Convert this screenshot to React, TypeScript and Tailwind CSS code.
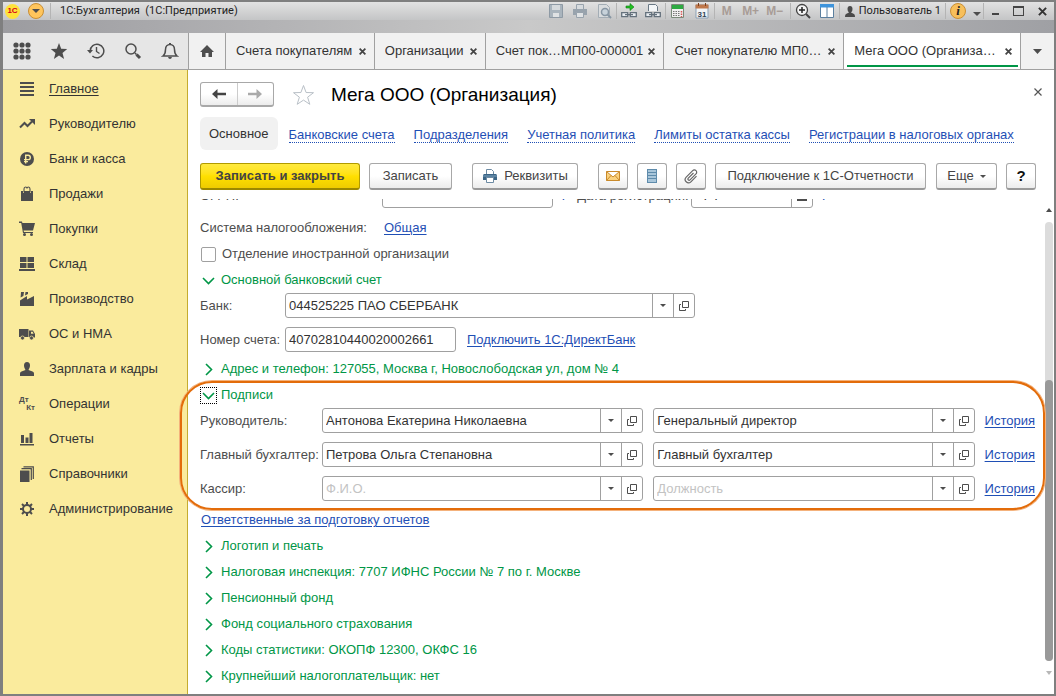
import { useState } from "react";
import type { ReactNode } from "react";
import clsx from "clsx";

/* ---------- data ---------- */

const openTabs = [
  { title: "Счета покупателям", size: "flex-[149]" },
  { title: "Организации", size: "flex-[111]" },
  { title: "Счет пок…МП00-000001", size: "flex-[179]" },
  { title: "Счет покупателю МП0…", size: "flex-[180]" },
  { title: "Мега ООО (Организа…", size: "flex-[177]", active: true },
];

const formLinks = [
  "Банковские счета",
  "Подразделения",
  "Учетная политика",
  "Лимиты остатка кассы",
  "Регистрации в налоговых органах",
];

const signers = [
  { label: "Руководитель:", name: "Антонова Екатерина Николаевна", post: "Генеральный директор" },
  { label: "Главный бухгалтер:", name: "Петрова Ольга Степановна", post: "Главный бухгалтер" },
  { label: "Кассир:", name: "", post: "" },
];

const collapsedGroups = [
  "Логотип и печать",
  "Налоговая инспекция: 7707 ИФНС России № 7 по г. Москве",
  "Пенсионный фонд",
  "Фонд социального страхования",
  "Коды статистики: ОКОПФ 12300, ОКФС 16",
  "Крупнейший налогоплательщик: нет",
];

/* ---------- sidebar icons, 16x16 ---------- */

const Icon = ({ children }: { children: ReactNode }) => (
  <svg viewBox="0 0 16 16" className="size-4 shrink-0" fill="#4d4d4d" aria-hidden="true">
    {children}
  </svg>
);

const menu = [
  {
    title: "Главное",
    icon: <path d="M1 1h14v2H1zM1 5h14v2H1zM1 9h14v2H1zM1 13h14v2H1z" />,
  },
  {
    title: "Руководителю",
    icon: (
      <>
        <path d="M1 11.5 5.5 7l3 3L13 5.5" fill="none" stroke="#4d4d4d" strokeWidth="2" />
        <path d="M10 3h6v6z" />
      </>
    ),
  },
  {
    title: "Банк и касса",
    icon: (
      <>
        <circle cx="8" cy="8" r="7" />
        <path d="M6.7 12.5V4.2h2.4a2.2 2.2 0 0 1 0 4.4H5M5 10.6h4" fill="none" stroke="#faeb9d" strokeWidth="1.4" />
      </>
    ),
  },
  {
    title: "Продажи",
    icon: (
      <>
        <path d="M2 5h2v2h1V5h6v2h1V5h2v10H2z" />
        <path d="M5 6.5V3q0-2 1.5-2T8 2.5Q8 1 9.5 1T11 3v3.5" fill="none" stroke="#4d4d4d" strokeWidth="1.1" />
      </>
    ),
  },
  {
    title: "Покупки",
    icon: (
      <>
        <path d="M0 .5h3l.4 1.500H16l-2 7.500H4.500L5 11h9v1H4L2.200 2H0z" />
        <circle cx="5.5" cy="13.5" r="1.5" />
        <circle cx="12.5" cy="13.5" r="1.5" />
      </>
    ),
  },
  {
    title: "Склад",
    icon: <path d="M1 1h6.500v5H1zM8.500 1H15v5H8.500zM1 7h6.500v5H1zM8.500 7H15v5H8.500zM0 13h16v2H0z" />,
  },
  {
    title: "Производство",
    icon: <path d="M1 9.500 8 5v3.500L15 5v10H1zM2 1h3l-.6 4L1.600 6.500zM6.500 1H9v2L6 4.500z" />,
  },
  {
    title: "ОС и НМА",
    icon: (
      <>
        <path d="M0 3h9.500v8H0zM10 4.500h4l2 3.500v3.500h-6z" />
        <path d="M12 5.700h1.600l1 2H12z" fill="#faeb9d" />
        <circle cx="3.5" cy="12" r="2" stroke="#faeb9d" strokeWidth=".7" />
        <circle cx="12.5" cy="12" r="2" stroke="#faeb9d" strokeWidth=".7" />
      </>
    ),
  },
  {
    title: "Зарплата и кадры",
    icon: (
      <path d="M8 1c2 0 3 1.500 3 3.500S9.800 8.500 9.500 9l4 1.500q1.500.6 1.500 2V15H1v-2.500q0-1.400 1.500-2l4-1.500C6.200 8.500 5 6.500 5 4.500S6 1 8 1z" />
    ),
  },
  { title: "Операции", icon: null },
  {
    title: "Отчеты",
    icon: <path d="M2 4h3v8H2zM6.500 6.500h3V12h-3zM10.500 2h3v10h-3zM1 13h14v1.500H1z" />,
  },
  {
    title: "Справочники",
    icon: (
      <>
        <path d="M1 4.500h9.500V16H1z" />
        <path d="M2.500 2.700h9.800V14M4.500.8h9.800V13" fill="none" stroke="#4d4d4d" strokeWidth="1.2" />
      </>
    ),
  },
  {
    title: "Администрирование",
    icon: (
      <>
        <circle cx="8" cy="8" r="4" fill="none" stroke="#4d4d4d" strokeWidth="2" />
        <path
          d="M8 1v3M8 12v3M1 8h3M12 8h3M3 3l2.200 2.200M10.800 10.800 13 13M13 3l-2.200 2.200M5.200 10.800 3 13"
          stroke="#4d4d4d"
          strokeWidth="2"
        />
      </>
    ),
  },
];

/* ---------- small parts ---------- */

const Caret = ({ className = "h-[3px] w-[6px]" }: { className?: string }) => (
  <svg viewBox="0 0 6 3" preserveAspectRatio="none" className={className} fill="#4d4d4d" aria-hidden="true">
    <path d="M0 0h6L3 3z" />
  </svg>
);

const OpenIcon = () => (
  <svg viewBox="0 0 10 10" className="size-[10px]" fill="none" stroke="#4d4d4d" aria-hidden="true">
    <path d="M3.500.5h6v6h-6zM2 3.500H.5v6h6V8" />
  </svg>
);

type FieldProps = {
  id: string;
  label: string;
  value: string;
  placeholder?: string;
  className?: string;
  picker?: boolean;
};

const Field = ({ id, label, value, placeholder, className, picker = true }: FieldProps) => {
  const [text, setText] = useState(value);

  return (
    <div className={clsx("flex h-[25px] min-w-0 overflow-hidden rounded-[3px] border border-[#a0a0a0] bg-white", className)}>
      <input
        id={id}
        aria-label={label}
        value={text}
        placeholder={placeholder}
        onChange={(e) => setText(e.target.value)}
        className="w-full min-w-0 flex-1 px-[3px] text-[#333] outline-none placeholder:text-[#c3c3c3]"
      />
      {picker && (
        <>
          <button aria-label="Выбрать" className="flex w-[21px] items-center justify-center border-l border-[#a0a0a0]">
            <Caret />
          </button>
          <button aria-label="Открыть" className="flex w-[21px] items-center justify-center border-l border-[#a0a0a0]">
            <OpenIcon />
          </button>
        </>
      )}
    </div>
  );
};

const Group = ({ title, open, focused }: { title: string; open?: boolean; focused?: boolean }) => (
  <button aria-expanded={!!open} className="flex h-[26px] items-center gap-1 text-[#009646]">
    <span
      className={clsx(
        "flex size-[17px] items-center justify-center border",
        focused ? "border-dotted border-black" : "border-transparent"
      )}
    >
      <svg viewBox="0 0 13 13" className="size-[13px] shrink-0" fill="none" stroke="#009646" strokeWidth="1.6" aria-hidden="true">
        <path d={open ? "M1 4l5.500 5.500L12 4" : "M4 1l5.500 5.500L4 12"} />
      </svg>
    </span>
    {title}
  </button>
);

const Link = ({ children }: { children: ReactNode }) => (
  <a href="#" className="whitespace-nowrap text-[#1f4fb5] underline underline-offset-2">
    {children}
  </a>
);

type ButtonProps = { children: ReactNode; className?: string; label?: string; primary?: boolean };

const Button = ({ children, className, label, primary }: ButtonProps) => (
  <button
    aria-label={label}
    className={clsx(
      "flex h-[27px] shrink-0 items-center justify-center rounded-[3px] border border-b-2 bg-gradient-to-b whitespace-nowrap text-[#444]",
      primary
        ? "border-[#b09a00] border-b-[#9c8800] from-[#ffea3d] via-[#ffe000] to-[#eecb00] font-bold"
        : "border-[#a8a8a8] border-b-[#999] from-white from-50% to-[#ececec]",
      className
    )}
  >
    {children}
  </button>
);

const Printer = () => (
  <svg viewBox="0 0 16 16" className="size-4" aria-hidden="true">
    <path d="M4.500 6V1.500h5l2 2V6" fill="#fff" stroke="#6c8aa3" />
    <path d="M2 6h12l1 1v5H1V7z" fill="#3b6586" />
    <path d="M1 8h14" stroke="#7fa3bf" />
    <path d="M4.500 9.500h7v5h-7z" fill="#fff" stroke="#6c8aa3" />
  </svg>
);

/* ---------- window title bar ---------- */

const Tool = ({ label, children }: { label: string; children: ReactNode }) => (
  <button aria-label={label} className="flex w-6 items-center justify-center">
    <svg viewBox="0 0 16 16" className="size-4" aria-hidden="true">
      {children}
    </svg>
  </button>
);

const Divider = () => <span className="h-4 w-px bg-[#b4b4b4]" />;

const TitleBar = () => (
  <header className="h-[31px] bg-gradient-to-r from-[#9c9ca0] via-[#c9c9c9] to-[#9fa0a4] text-[#222]">
    <div className="flex h-[18px] items-center bg-gradient-to-b from-[#e2e2e2] to-[#c4c5c6]">
      <span className="ml-[2px] flex size-[15px] items-center justify-center rounded-full bg-[#ffe23a] text-[8px] font-bold text-[#d6001c]">
        1С
      </span>
      <button
        aria-label="Главное меню"
        className="mr-[6px] ml-2 flex size-4 items-center justify-center rounded-full border border-[#c98f35] bg-[#ffc55c]"
      >
        <Caret className="h-[4px] w-[8px]" />
      </button>
      <Divider />
      <span className="ml-[9px] flex-1 font-[Roboto,sans-serif] text-[11px] whitespace-pre">1С:Бухгалтерия  (1С:Предприятие)</span>

      <Tool label="Сохранить">
        <path d="M1.500 1.500h13v13h-13z" fill="#a9b4bd" stroke="#8e9aa5" />
        <path d="M4 2h8v5H4z" fill="#d6dadd" />
        <path d="M5 10h6v4H5z" fill="#dfe2e4" />
      </Tool>
      <Tool label="Печать">
        <path d="M4.500 6V1.500h7V6" fill="#d7dbde" stroke="#98a3ad" />
        <path d="M1 6h14v6H1z" fill="#98a3ad" />
        <path d="M4.500 9.500h7v5h-7z" fill="#e0e3e5" stroke="#98a3ad" />
      </Tool>
      <Tool label="Просмотр">
        <path d="M2.500 1.500h8l3 3v10h-11z" fill="#d9dcde" stroke="#a3adb5" />
        <circle cx="9" cy="9" r="3.5" fill="#c7d2da" stroke="#8796a3" strokeWidth="1.5" />
        <path d="m11.500 11.500 3.500 3.500" stroke="#8796a3" strokeWidth="2" />
      </Tool>
      <Divider />
      <Tool label="Получить ссылку">
        <path d="M5 3h4V.5l4 3.500-4 3.500V5H5z" fill="#23c123" stroke="#0c7d12" strokeWidth=".6" />
        <path d="M.7 9.700h6v4h-6zM9.300 9.700h6v4h-6zM4 11.700h8" fill="#e8edf1" stroke="#64717c" strokeWidth="1.3" />
      </Tool>
      <Tool label="Перейти по ссылке">
        <path d="M3.500 8V1.500h7l2 2V8" fill="#f3f6f8" stroke="#697885" />
        <path d="M.7 9.700h6v4h-6zM9.300 9.700h6v4h-6zM4 11.700h8" fill="#e8edf1" stroke="#64717c" strokeWidth="1.3" />
      </Tool>
      <Divider />
      <Tool label="Калькулятор">
        <path d="M1.500 1.500h12v13h-12z" fill="#f1f1f1" stroke="#7b8b7b" />
        <path d="M2 2h11v4H2z" fill="#2eaa42" />
        <path d="M3 8.500h7M3 10.500h7M3 12.500h7" stroke="#777" strokeDasharray="1.5 1" />
        <path d="M11.500 8v6" stroke="#d65454" strokeWidth="1.5" strokeDasharray="1.5 1" />
      </Tool>
      <Tool label="Календарь">
        <path d="M2 2h12v13H2z" fill="#f2f4f6" stroke="#8ba0b5" />
        <path d="M1.500 1.500h13v4h-13z" fill="#c0784b" />
        <path d="M4.500 0v3M11.500 0v3" stroke="#7d3f1b" />
        <text x="8" y="13.5" textAnchor="middle" fontSize="8" fontWeight="bold" fill="#345">
          31
        </text>
      </Tool>
      <Divider />
      <div className="mr-[3px] flex text-xs font-bold text-[#a89c96]">
        <button className="w-6">M</button>
        <button className="w-6">M+</button>
        <button className="w-6">M−</button>
      </div>
      <Divider />
      <Tool label="Масштаб">
        <circle cx="7" cy="7" r="5.5" fill="#f4f4f4" stroke="#444" strokeWidth="1.3" />
        <path d="M4 7h6M7 4v6" stroke="#222" strokeWidth="1.5" />
        <path d="m11 11 4 4" stroke="#444" strokeWidth="2" />
      </Tool>
      <Tool label="Окна">
        <path d="M1.500 1.500h13v13h-13z" fill="#fff" stroke="#5b7f9e" />
        <path d="M1 1h14v3.500H1z" fill="#3e94dc" />
        <path d="M8 4v11" stroke="#5b7f9e" />
      </Tool>
      <Divider />
      <button className="ml-[5px] flex items-center gap-1 pr-1 font-[Roboto,sans-serif] text-[11px] whitespace-nowrap">
        <svg viewBox="0 0 10 11" className="h-[11px] w-[10px]" fill="#4a4a4a" aria-hidden="true">
          <path d="M5 0q2.500 0 2.500 3T6 6.500L9 8q1 .5 1 3H0q0-2.500 1-3l3-1.500Q2.500 6 2.500 3T5 0z" />
        </svg>
        Пользователь 1
      </button>
      <Divider />
      <button
        aria-label="Справка"
        className="ml-1 flex size-4 items-center justify-center rounded-full border border-[#c98f35] bg-[#f7bf5b] font-['Liberation_Serif',serif] text-[13px] font-bold italic"
      >
        i
      </button>
      <button aria-label="Меню справки" className="mr-[2px] ml-[7px] pt-[6px]">
        <Caret className="h-[4px] w-[8px]" />
      </button>
      <Divider />
      <button aria-label="Свернуть" className="flex w-[22px] items-center justify-center pt-[6px]">
        <span className="h-[2px] w-[7px] bg-[#444]" />
      </button>
      <button aria-label="Развернуть" className="flex w-6 items-center justify-center">
        <span className="h-[10px] w-[11px] border border-t-2 border-[#444]" />
      </button>
      <button aria-label="Закрыть" className="flex w-6 items-center justify-center">
        <svg viewBox="0 0 10 10" className="size-[9px]" stroke="#333" strokeWidth="2.2" aria-hidden="true">
          <path d="m1 1 8 8M9 1 1 9" />
        </svg>
      </button>
    </div>
  </header>
);

/* ---------- tab strip ---------- */

const Shortcut = ({ label, children }: { label: string; children: ReactNode }) => (
  <button aria-label={label} className="flex h-full w-[37px] items-center justify-center">
    <svg viewBox="0 0 18 18" className="size-[18px]" fill="#4d4d4d" aria-hidden="true">
      {children}
    </svg>
  </button>
);

const TabStrip = () => (
  <nav className="flex h-[37px] border-b border-[#a0a0a0] bg-[#f1f1f1] text-[#333]">
    <div className="flex w-[186px] shrink-0 items-center border-r border-[#a0a0a0] bg-[#e6e6e6]">
      <Shortcut label="Функции">
        {[3, 9, 15].map((y) => [3, 9, 15].map((x) => <circle key={`${x}-${y}`} cx={x} cy={y} r="2.6" />))}
      </Shortcut>
      <Shortcut label="Избранное">
        <path d="m9 1 2.200 5.800 6 .3-4.700 3.800 1.600 6L9 13.500 3.900 16.900l1.600-6L.8 7.100l6-.3z" />
      </Shortcut>
      <Shortcut label="История">
        <path d="M3.200 9a6.800 6.800 0 1 1 2.200 5" fill="none" stroke="#4d4d4d" strokeWidth="1.5" />
        <path d="M0 8h6l-3 3.500z" />
        <path d="M9.500 5v4.500l3 2" fill="none" stroke="#4d4d4d" strokeWidth="1.4" />
      </Shortcut>
      <Shortcut label="Поиск">
        <circle cx="7" cy="7" r="5" fill="none" stroke="#4d4d4d" strokeWidth="1.5" />
        <path d="m11 11 1.500 1.500" stroke="#4d4d4d" strokeWidth="1.5" />
        <path d="m12.500 12.500 3.500 3.500" stroke="#4d4d4d" strokeWidth="3" />
      </Shortcut>
      <Shortcut label="Оповещения">
        <path
          d="M2 14h14c-2-1.500-2.500-3-2.500-6.500C13.500 4.500 11.500 2.500 9 2.500S4.500 4.500 4.500 7.500C4.500 11 4 12.500 2 14z"
          fill="none"
          stroke="#4d4d4d"
          strokeWidth="1.5"
        />
        <path d="M8 1h2v2H8zM7 15h4q-.5 2-2 2t-2-2z" />
      </Shortcut>
    </div>
    <button aria-label="Начальная страница" className="flex w-[37px] shrink-0 items-center justify-center border-r border-[#a0a0a0]">
      <svg viewBox="0 0 14 12" className="h-3 w-[14px]" fill="#4d4d4d" aria-hidden="true">
        <path d="M7 0l7 7h-2v5H8.500V8h-3v4H2V7H0z" />
      </svg>
    </button>
    {openTabs.map((tab) => (
      <div key={tab.title} className={clsx("relative flex min-w-0", tab.size, tab.active && "bg-white")}>
        <div className="flex w-full min-w-0 items-center border-r border-[#a0a0a0] pr-2 pl-[10px]">
          <button className="min-w-0 flex-1 overflow-hidden text-left whitespace-nowrap">{tab.title}</button>
          <button aria-label="Закрыть вкладку" className="shrink-0">
            <svg viewBox="0 0 8 8" className="size-[7px]" stroke="#444" strokeWidth="2" aria-hidden="true">
              <path d="m.7.7 6.600 6.600M7.300.7.7 7.300" />
            </svg>
          </button>
        </div>
        {tab.active && <span className="absolute inset-x-[3px] bottom-[2px] h-[2px] bg-[#009646]" />}
      </div>
    ))}
    <button aria-label="Список вкладок" className="flex w-[33px] shrink-0 items-center justify-center">
      <Caret className="h-[5px] w-[9px]" />
    </button>
  </nav>
);

const Sidebar = () => (
  <aside className="w-[185px] shrink-0 border-r border-[#c5ac2f] bg-[#faeb9d] pt-px">
    {menu.map((item, i) => (
      <a key={item.title} href="#" className="flex h-[35px] items-center gap-[14px] pl-4 whitespace-nowrap text-[#333]">
        {item.icon ? (
          <Icon>{item.icon}</Icon>
        ) : (
          <span className="flex w-4 flex-col text-[8px] leading-[8px] font-bold text-[#4d4d4d]">
            <span>Дт</span>
            <span className="self-end">Кт</span>
          </span>
        )}
        <span className={clsx(i === 0 && "underline underline-offset-2")}>{item.title}</span>
      </a>
    ))}
  </aside>
);

/* ---------- form ---------- */

const FormHeader = () => (
  <div className="px-3 pt-3">
    <div className="flex h-[25px] items-center">
      <div className="flex h-[25px] w-[74px] rounded-[3px] border border-b-2 border-[#a8a8a8] bg-gradient-to-b from-white from-50% to-[#ececec]">
        {["Назад", "Вперед"].map((label, i) => (
          <button
            key={label}
            aria-label={label}
            className={clsx("flex flex-1 items-center justify-center", i === 1 && "border-l border-[#ccc]")}
          >
            <svg
              viewBox="0 0 14 10"
              className={clsx("h-[10px] w-[14px]", i === 1 && "rotate-180")}
              fill={i ? "#aaa" : "#444"}
              aria-hidden="true"
            >
              <path d="M0 5l5.500-5v3.800H14v2.400H5.500V10z" />
            </svg>
          </button>
        ))}
      </div>
      <button aria-label="В избранное" className="ml-[18px]">
        <svg viewBox="0 0 23 22" className="h-[22px] w-[23px]" fill="none" stroke="#b9c0c7" aria-hidden="true">
          <path d="m11.500 1.500 2.600 7 7.400.2-5.900 4.500 2.200 7.100-6.300-4.200-6.300 4.200 2.200-7.100L1.500 8.700l7.400-.2z" />
        </svg>
      </button>
      <h1 className="ml-4 flex-1 text-[19px] leading-6 whitespace-nowrap text-black">Мега ООО (Организация)</h1>
      <button aria-label="Закрыть форму" className="self-start pt-[6px]">
        <svg viewBox="0 0 8 8" className="size-2" stroke="#555" strokeWidth="1.2" aria-hidden="true">
          <path d="m.5.500 7 7M7.500.5l-7 7" />
        </svg>
      </button>
    </div>

    <div className="mt-[10px] flex h-[33px] items-center gap-[19px]">
      <button className="-mr-2 h-full rounded-md bg-[#f1f1f1] px-[9px] text-[#333]">Основное</button>
      {formLinks.map((title) => (
        <a
          key={title}
          href="#"
          className="border-b border-dotted border-[#1f4fb5] pt-[3px] leading-[14px] whitespace-nowrap text-[#1f4fb5]"
        >
          {title}
        </a>
      ))}
    </div>

    <div className="mt-[13px] flex gap-[9px] pr-[6px]">
      <Button primary className="w-[160px]">
        Записать и закрыть
      </Button>
      <Button className="w-[83px]">Записать</Button>
      <Button className="ml-[11px] w-[106px] gap-[6px]">
        <Printer />
        Реквизиты
      </Button>
      <Button className="ml-[11px] w-[30px]" label="Отправить по почте">
        <svg viewBox="0 0 16 12" className="h-3 w-4" fill="#fbd27e" stroke="#c98a2b" aria-hidden="true">
          <path d="M1.500 1.500h13v9h-13zM1.500 1.500 8 7l6.500-5.500M1.500 10.500l4.500-5M14.500 10.500l-4.500-5" />
        </svg>
      </Button>
      <Button className="w-[30px]" label="Реестр">
        <svg viewBox="0 0 12 16" className="h-4 w-3" aria-hidden="true">
          <path d="M1 1h10v14H1z" fill="#a9c6da" />
          <path d="M1 1.500h10M1 4.500h10M1 7.500h10M1 10.500h10M1 14.500h10M1.500 1v14M10.500 1v14" stroke="#5e8bab" />
        </svg>
      </Button>
      <Button className="w-[30px]" label="Присоединенные файлы">
        <svg viewBox="0 0 16 16" className="size-4" fill="none" stroke="#666" strokeWidth="1.2" aria-hidden="true">
          <path d="m10.500 5-5.200 5.200a1.200 1.200 0 0 0 1.700 1.700l6-6a2.300 2.300 0 0 0-3.300-3.300L3.200 9.100a3.300 3.300 0 0 0 4.700 4.700l5.600-5.600" />
        </svg>
      </Button>
      <Button className="w-[211px]">Подключение к 1С-Отчетности</Button>
      <Button className="ml-auto w-[61px] gap-[6px]">
        Еще
        <Caret />
      </Button>
      <Button className="w-[30px]">
        <span className="text-[15px] font-bold text-[#111]">?</span>
      </Button>
    </div>
  </div>
);

const Signatures = () => (
  <section className="relative">
    <Group title="Подписи" open focused />
    <div className="flex flex-col gap-[9px]">
      {signers.map((s) => (
        <div key={s.label} className="flex items-center gap-[10px]">
          <label htmlFor={s.label} className="-mr-[10px] w-[122px] shrink-0 whitespace-nowrap">
            {s.label}
          </label>
          <Field id={s.label} label={s.label} value={s.name} placeholder="Ф.И.О." className="flex-1" />
          <Field id={`${s.label}-post`} label="Должность" value={s.post} placeholder="Должность" className="flex-1" />
          <Link>История</Link>
        </div>
      ))}
    </div>
    {/* highlight frame */}
    <div className="pointer-events-none absolute -top-px -right-[10px] -bottom-[9px] -left-5 rounded-[32px] border-2 border-[#e36c0a] shadow-[0_0_0_1px_#f4b27c]" />
  </section>
);

const FormBody = () => (
  <div className="mt-[9px] flex min-h-0 flex-1 [clip-path:inset(0_0_0_-20px)]">
    <div className="relative z-10 -mt-4 min-w-0 flex-1 pr-2 pl-3 text-[#4d4d4d]">
      <div className="flex h-[25px] items-center">
        <label htmlFor="ogrn" className="w-[182px]">
          ОГРН:
        </label>
        <Field id="ogrn" label="ОГРН" value="" picker={false} className="w-[171px]" />
        <a href="#" className="mx-[7px] text-[#1f4fb5]">
          ?
        </a>
        <label htmlFor="regdate" className="w-[117px] pl-[3px] whitespace-nowrap">
          Дата регистрации:
        </label>
        <div className="flex h-[25px] w-[122px] overflow-hidden rounded-[3px] border border-[#a0a0a0]">
          <input id="regdate" defaultValue="  .  .    " className="min-w-0 flex-1 px-1 text-[#333] outline-none" />
          <button aria-label="Выбрать дату" className="flex w-[21px] items-center justify-center border-l border-[#a0a0a0]">
            <span className="size-[10px] border border-[#4d4d4d] border-y-2" />
          </button>
        </div>
        <a href="#" className="ml-[7px] text-[#1f4fb5]">
          ?
        </a>
      </div>

      <div className="mt-[7px] flex h-[26px] items-center">
        <span className="w-[184px]">Система налогообложения:</span>
        <Link>Общая</Link>
      </div>
      <label className="flex h-[26px] items-center gap-[6px] pl-px">
        <input
          type="checkbox"
          className="size-[15px] appearance-none rounded-[2px] border border-[#a0a0a0] bg-white checked:bg-[#009646]"
        />
        Отделение иностранной организации
      </label>

      <Group title="Основной банковский счет" open />
      <div className="flex items-center">
        <label htmlFor="bank" className="w-[85px] shrink-0">
          Банк:
        </label>
        <Field id="bank" label="Банк" value="044525225 ПАО СБЕРБАНК" className="w-[410px]" />
      </div>
      <div className="mt-[9px] flex items-center">
        <label htmlFor="account" className="w-[85px] shrink-0">
          Номер счета:
        </label>
        <Field id="account" label="Номер счета" value="40702810440020002661" picker={false} className="mr-[11px] w-[171px]" />
        <Link>Подключить 1С:ДиректБанк</Link>
      </div>

      <div className="mt-1">
        <Group title="Адрес и телефон: 127055, Москва г, Новослободская ул, дом № 4" />
      </div>
      <Signatures />

      <div className="mt-[6px] flex h-[26px] items-center pl-px">
        <Link>Ответственные за подготовку отчетов</Link>
      </div>
      {collapsedGroups.map((title) => (
        <Group key={title} title={title} />
      ))}
    </div>

    {/* scrollbar */}
    <div className="flex w-[11px] shrink-0 flex-col items-center pt-[9px] pb-[19px]">
      <Caret className="h-[4px] w-[6px] rotate-180" />
      <div className="my-[10px] flex w-2 flex-1 flex-col justify-end rounded-full bg-[#dcdcdc]">
        <div className="h-[64%] rounded-full bg-[#999]" />
      </div>
      <Caret className="h-[4px] w-[6px] opacity-40" />
    </div>
  </div>
);

export default function App() {
  return (
    <div className="flex h-screen flex-col overflow-hidden border-2 border-l-[3px] border-[#7f7f7f] bg-white font-['Liberation_Sans',Arial,sans-serif] text-[13px] leading-4">
      <TitleBar />
      <TabStrip />
      <div className="flex min-h-0 flex-1">
        <Sidebar />
        <main className="flex min-w-0 flex-1 flex-col">
          <FormHeader />
          <FormBody />
        </main>
      </div>
    </div>
  );
}
